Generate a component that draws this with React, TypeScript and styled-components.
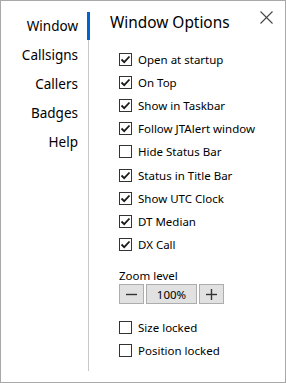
import styled, { createGlobalStyle } from "styled-components";

const GlobalStyle = createGlobalStyle`
  html, body {
    margin: 0;
    padding: 0;
    background: #ffffff;
  }
  body {
    font-family: "Noto Sans", "Open Sans", sans-serif;
    color: #000000;
  }
`;

const navItems = ["Window", "Callsigns", "Callers", "Badges", "Help"];

const windowOptions = [
  { label: "Open at startup", checked: true },
  { label: "On Top", checked: true },
  { label: "Show in Taskbar", checked: true },
  { label: "Follow JTAlert window", checked: true },
  { label: "Hide Status Bar", checked: false },
  { label: "Status in Title Bar", checked: true },
  { label: "Show UTC Clock", checked: true },
  { label: "DT Median", checked: true },
  { label: "DX Call", checked: true },
];

const lockOptions = [
  { label: "Size locked", checked: false },
  { label: "Position locked", checked: false },
];

const CheckRow = ({ label, checked }: { label: string; checked: boolean }) => (
  <Row>
    <Box>
      {checked && (
        <svg width="11" height="11" viewBox="0 0 11 11">
          <polyline
            points="1.5,5.5 4.2,8.2 9.5,2.5"
            fill="none"
            stroke="#1a1a1a"
            strokeWidth="1.8"
          />
        </svg>
      )}
    </Box>
    <RowLabel>{label}</RowLabel>
  </Row>
);

const App = () => {
  return (
    <>
      <GlobalStyle />
      <Frame>
        <Nav>
          {navItems.map((item, i) => (
            <NavItem key={item} $active={i === 0}>
              {item}
            </NavItem>
          ))}
        </Nav>
        <Content>
          <Title>Window Options</Title>
          <Options>
            {windowOptions.map((o) => (
              <CheckRow key={o.label} label={o.label} checked={o.checked} />
            ))}
          </Options>
          <ZoomLabel>Zoom level</ZoomLabel>
          <Stepper>
            <StepButton $wide={false}>
              <svg width="11" height="11" viewBox="0 0 11 11">
                <line x1="0" y1="5.5" x2="11" y2="5.5" stroke="#333" strokeWidth="1.4" />
              </svg>
            </StepButton>
            <StepButton $wide>100%</StepButton>
            <StepButton $wide={false}>
              <svg width="11" height="11" viewBox="0 0 11 11">
                <line x1="0" y1="5.5" x2="11" y2="5.5" stroke="#333" strokeWidth="1.4" />
                <line x1="5.5" y1="0" x2="5.5" y2="11" stroke="#333" strokeWidth="1.4" />
              </svg>
            </StepButton>
          </Stepper>
          <Locks>
            {lockOptions.map((o) => (
              <CheckRow key={o.label} label={o.label} checked={o.checked} />
            ))}
          </Locks>
        </Content>
        <CloseButton>
          <svg width="13" height="13" viewBox="0 0 13 13">
            <line x1="0.5" y1="0.5" x2="12.5" y2="12.5" stroke="#444" strokeWidth="1.1" />
            <line x1="12.5" y1="0.5" x2="0.5" y2="12.5" stroke="#444" strokeWidth="1.1" />
          </svg>
        </CloseButton>
      </Frame>
    </>
  );
};

const Frame = styled.div`
  position: relative;
  box-sizing: border-box;
  width: 286px;
  height: 383px;
  border: 1px solid #a8a8a8;
  background: #ffffff;
  display: flex;
`;

const Nav = styled.nav`
  width: 87px;
  margin: 11px 0;
  border-right: 1px solid #c8c8c8;
  display: flex;
  flex-direction: column;
`;

const NavItem = styled.div<{ $active: boolean }>`
  position: relative;
  height: 29px;
  line-height: 29px;
  padding-right: 10px;
  text-align: right;
  font-size: 13.5px;

  &::after {
    content: "";
    display: ${({ $active }) => ($active ? "block" : "none")};
    position: absolute;
    top: 0;
    right: -2px;
    width: 3px;
    height: 28px;
    background: #0063cf;
  }
`;

const Content = styled.div`
  flex: 1;
  padding: 11px 0 0 21px;
  display: flex;
  flex-direction: column;
  align-items: flex-start;
`;

const Title = styled.h1`
  margin: 0;
  height: 22px;
  line-height: 22px;
  font-size: 15.4px;
  font-weight: 400;
`;

const Options = styled.div`
  margin-top: 14px;
  padding-left: 9px;
  display: flex;
  flex-direction: column;
`;

const Row = styled.label`
  display: flex;
  align-items: center;
  height: 23.1px;
  gap: 6px;
  font-size: 11.5px;
`;

const Box = styled.span`
  box-sizing: border-box;
  width: 13px;
  height: 13px;
  border: 1px solid #333333;
  background: #ffffff;
  display: flex;
  align-items: center;
  justify-content: center;
`;

const RowLabel = styled.span`
  white-space: nowrap;
`;

const ZoomLabel = styled.div`
  margin-top: 12.5px;
  padding-left: 9px;
  height: 16px;
  line-height: 16px;
  font-size: 11.5px;
`;

const Stepper = styled.div`
  margin-left: 9px;
  display: flex;
  gap: 2px;
`;

const StepButton = styled.div<{ $wide: boolean }>`
  box-sizing: border-box;
  width: ${({ $wide }) => ($wide ? "51px" : "25px")};
  height: 20px;
  border: 1px solid #adadad;
  background: #e1e1e1;
  display: flex;
  align-items: center;
  justify-content: center;
  font-size: 11.5px;
`;

const Locks = styled.div`
  margin-top: 11.6px;
  padding-left: 9px;
  display: flex;
  flex-direction: column;
`;

const CloseButton = styled.div`
  position: absolute;
  top: 6px;
  right: 12px;
  width: 13px;
  height: 13px;
`;

export default App;
